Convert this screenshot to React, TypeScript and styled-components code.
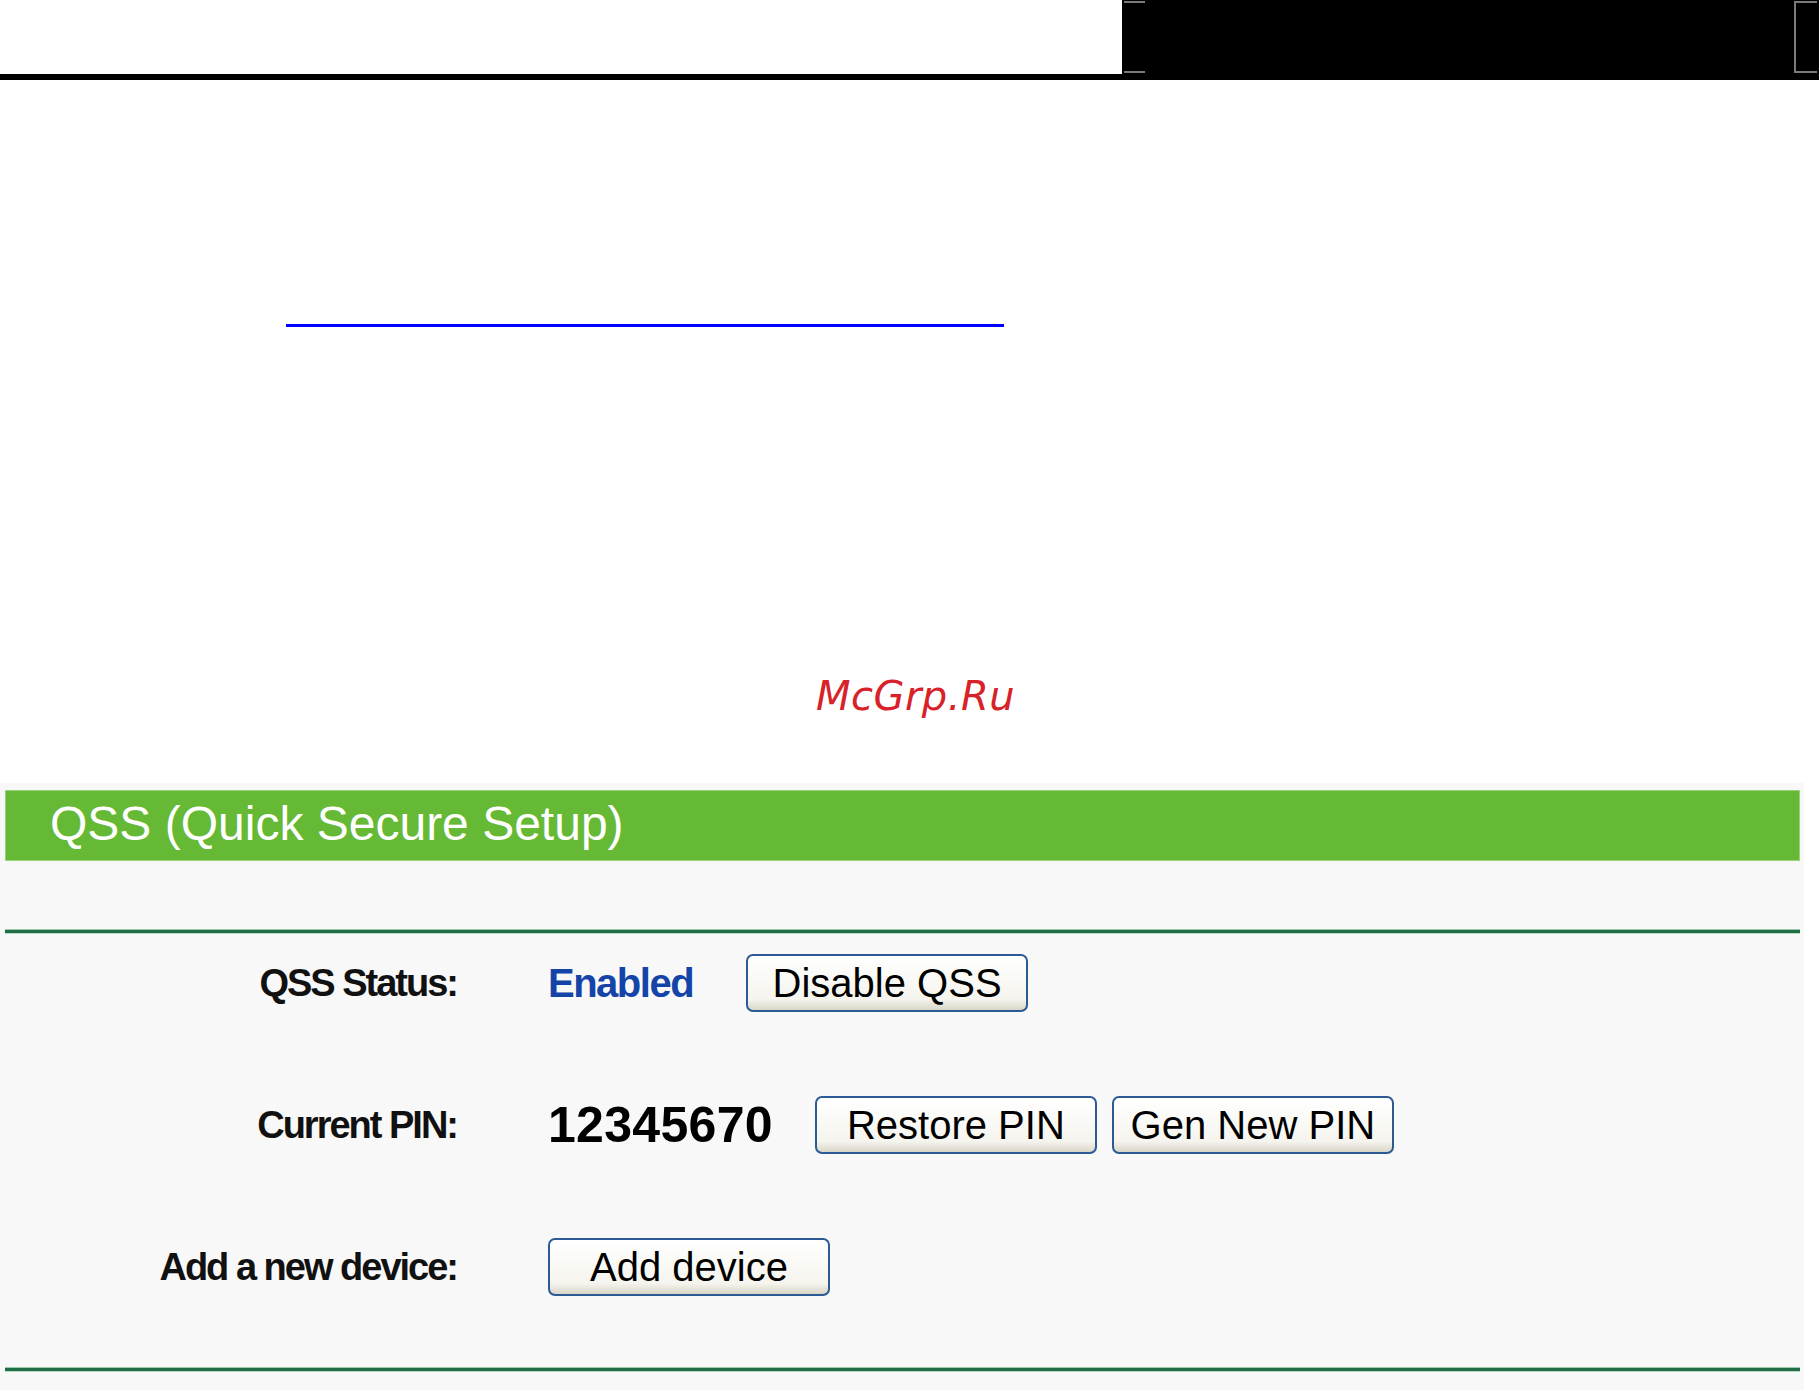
import { createGlobalStyle, styled } from "styled-components";

const GlobalStyle = createGlobalStyle`
  html, body {
    margin: 0;
    padding: 0;
    background: #fff;
  }
  body {
    width: 1819px;
    font-family: "Liberation Sans", Arial, sans-serif;
  }
`;

export const Page = styled.div`
  display: flex;
  flex-direction: column;
  width: 1819px;
  min-height: 1390px;
`;

export const Header = styled.div`
  display: flex;
  height: 74px;
`;

export const HeaderBlank = styled.div`
  flex: 1;
`;

export const HeaderBlock = styled.div`
  position: relative;
  width: 697px;
  background: #000;
`;

export const Mark = styled.span<{ $side: "left" | "right" }>`
  position: absolute;
  top: 1px;
  bottom: 1px;
  width: 21px;
  border-top: 2px solid #7a7a7a;
  border-bottom: 2px solid #7a7a7a;
  ${({ $side }) =>
    $side === "left"
      ? "left: 2px;"
      : "right: 2px; border-left: 2px solid #7a7a7a;"}
`;

export const Rule = styled.div`
  height: 6px;
  background: #000;
`;

export const LinkLine = styled.a`
  display: block;
  margin: 244px 0 0 286px;
  width: 718px;
  height: 3px;
  background: #0000ff;
`;

export const Watermark = styled.div`
  margin-top: 349px;
  height: 40px;
  line-height: 40px;
  text-align: center;
  padding-left: 12px;
  font-family: "DejaVu Sans", sans-serif;
  font-style: italic;
  font-size: 40px;
  letter-spacing: 0.5px;
  color: #d8222a;
`;

export const Panel = styled.section`
  margin-top: 67px;
  width: 1804px;
  box-sizing: border-box;
  padding: 7px 4px 19px 5px;
  background: #f8f8f8;
`;

export const TitleBar = styled.h1`
  margin: 0;
  height: 71px;
  box-sizing: border-box;
  padding: 0 0 3px 44px;
  border: 1px solid #98d27a;
  background: #66b934;
  color: #fff;
  font-size: 48px;
  font-weight: normal;
  line-height: 66px;
`;

export const Separator = styled.div<{ $top: number }>`
  margin-top: ${({ $top }) => $top}px;
  height: 3px;
  background: #1f6e45;
  box-shadow: 0 -1px 0 #9cc9ac, 0 1px 0 #b9dbc6;
`;

export const Form = styled.div`
  display: flex;
  flex-direction: column;
  gap: 84px;
  padding: 21px 0 72px;
`;

export const Row = styled.div`
  display: grid;
  grid-template-columns: 452px auto;
  column-gap: 91px;
  align-items: center;
  height: 58px;
`;

export const Label = styled.div`
  text-align: right;
  font-size: 38px;
  font-weight: bold;
  letter-spacing: -2px;
  color: #111;
`;

export const Value = styled.div`
  display: flex;
  align-items: center;
`;

export const Status = styled.span`
  margin-right: 53px;
  font-size: 40px;
  font-weight: bold;
  letter-spacing: -1.5px;
  color: #1444a8;
`;

export const Pin = styled.span`
  margin-right: 42px;
  font-size: 50px;
  font-weight: bold;
  letter-spacing: 0.3px;
  color: #000;
`;

export const Button = styled.button`
  width: 282px;
  height: 58px;
  padding: 0;
  border: 2px solid #2c5a94;
  border-radius: 7px;
  background: linear-gradient(#ffffff, #f5f4ee 80%, #d9d6c8);
  font-family: "Liberation Sans", Arial, sans-serif;
  font-size: 40px;
  color: #000;

  & + & {
    margin-left: 15px;
  }
`;

export default function App() {
  return (
    <Page>
      <GlobalStyle />
      <Header>
        <HeaderBlank />
        <HeaderBlock>
          <Mark $side="left" />
          <Mark $side="right" />
        </HeaderBlock>
      </Header>
      <Rule />
      <LinkLine href="#" aria-label="link" />
      <Watermark>McGrp.Ru</Watermark>
      <Panel>
        <TitleBar>QSS (Quick Secure Setup)</TitleBar>
        <Separator $top={69} />
        <Form>
          <Row>
            <Label>QSS Status:</Label>
            <Value>
              <Status>Enabled</Status>
              <Button>Disable QSS</Button>
            </Value>
          </Row>
          <Row>
            <Label>Current PIN:</Label>
            <Value>
              <Pin>12345670</Pin>
              <Button>Restore PIN</Button>
              <Button>Gen New PIN</Button>
            </Value>
          </Row>
          <Row>
            <Label>Add a new device:</Label>
            <Value>
              <Button>Add device</Button>
            </Value>
          </Row>
        </Form>
        <Separator $top={0} />
      </Panel>
    </Page>
  );
}
